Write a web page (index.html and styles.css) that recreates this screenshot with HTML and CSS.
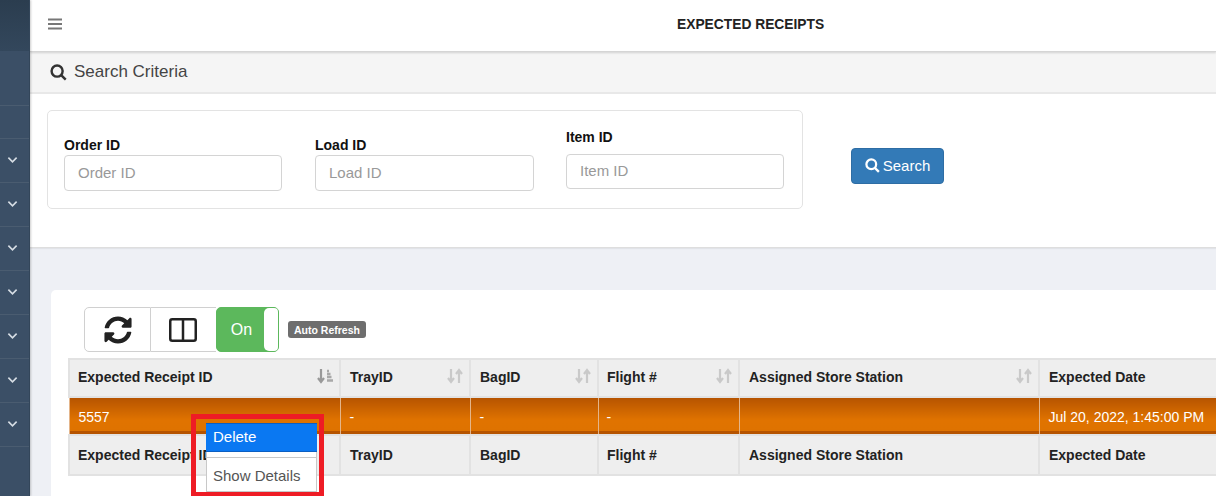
FILE: index.html
```html
<!DOCTYPE html>
<html lang="en">
<head>
<meta charset="utf-8">
<title>Expected Receipts</title>
<link rel="stylesheet" href="styles.css">
</head>
<body>
<div class="app">
  <aside class="sidebar">
    <div class="side-top"></div>
    <div class="side-item side-plain-a"></div>
    <div class="side-item side-plain-b"></div>
    <div class="side-item"><svg class="chev" viewBox="0 0 12 8"><path d="M1.500 1.500 6 6l4.500-4.500"/></svg></div>
    <div class="side-item"><svg class="chev" viewBox="0 0 12 8"><path d="M1.500 1.500 6 6l4.500-4.500"/></svg></div>
    <div class="side-item"><svg class="chev" viewBox="0 0 12 8"><path d="M1.500 1.500 6 6l4.500-4.500"/></svg></div>
    <div class="side-item"><svg class="chev" viewBox="0 0 12 8"><path d="M1.500 1.500 6 6l4.500-4.500"/></svg></div>
    <div class="side-item"><svg class="chev" viewBox="0 0 12 8"><path d="M1.500 1.500 6 6l4.500-4.500"/></svg></div>
    <div class="side-item"><svg class="chev" viewBox="0 0 12 8"><path d="M1.500 1.500 6 6l4.500-4.500"/></svg></div>
    <div class="side-item"><svg class="chev" viewBox="0 0 12 8"><path d="M1.500 1.500 6 6l4.500-4.500"/></svg></div>
  </aside>
  <main class="main">
    <header class="topbar">
      <svg class="burger" viewBox="0 0 14 12"><path d="M0 1.500h14M0 6h14M0 10.500h14"/></svg>
      <h1 class="title">EXPECTED RECEIPTS</h1>
    </header>
    <section class="search-panel">
      <div class="panel-head">
        <svg class="ico-search" viewBox="0 0 16 16"><circle cx="6.700" cy="6.700" r="5.200"/><path d="m10.500 10.500 4.300 4.300"/></svg>
        <span>Search Criteria</span>
      </div>
      <div class="panel-body">
        <form class="criteria">
          <div class="field">
            <label class="field-label">Order ID</label>
            <input class="field-input" placeholder="Order ID">
          </div>
          <div class="field field-wide">
            <label class="field-label">Load ID</label>
            <input class="field-input" placeholder="Load ID">
          </div>
          <div class="field field-raised">
            <label class="field-label">Item ID</label>
            <input class="field-input" placeholder="Item ID">
          </div>
        </form>
        <button class="search-btn" type="button">
          <svg class="ico-search-w" viewBox="0 0 16 16"><circle cx="6.700" cy="6.700" r="5.200"/><path d="m10.500 10.500 4.300 4.300"/></svg>
          Search
        </button>
      </div>
    </section>
    <section class="card">
      <div class="toolbar">
        <div class="btn-group">
          <button class="tool-btn" type="button">
            <svg class="ico-sync" viewBox="0 0 512 512"><path d="M370.720 133.280C339.458 104.008 298.888 87.962 255.848 88c-77.458.068-144.328 53.178-162.791 126.850-1.344 5.363-6.122 9.150-11.651 9.150H24.103c-7.498 0-13.194-6.807-11.807-14.176C33.933 94.924 134.813 8 256 8c66.448 0 126.791 26.136 171.315 68.685L463.030 40.970C478.149 25.851 504 36.559 504 57.941V192c0 13.255-10.745 24-24 24H345.941c-21.382 0-32.090-25.851-16.971-40.971l41.750-41.749zM32 296h134.059c21.382 0 32.090 25.851 16.971 40.971l-41.750 41.750c31.262 29.273 71.835 45.319 114.876 45.280 77.418-.07 144.315-53.144 162.787-126.849 1.344-5.363 6.122-9.150 11.651-9.150h57.304c7.498 0 13.194 6.807 11.807 14.176C478.067 417.076 377.187 504 256 504c-66.448 0-126.791-26.136-171.315-68.685L48.970 471.030C33.851 486.149 8 475.441 8 454.059V320c0-13.255 10.745-24 24-24z"/></svg>
          </button>
          <button class="tool-btn tool-btn-mid" type="button">
            <svg class="ico-cols" viewBox="0 0 28 24"><rect x="1.250" y="1.250" width="25.500" height="21.500" rx="2"/><path d="M14 1v22"/></svg>
          </button>
          <div class="switch"><span class="switch-on">On</span><span class="switch-knob"></span></div>
        </div>
        <span class="badge">Auto Refresh</span>
      </div>
      <table class="grid">
        <colgroup>
          <col class="c1"><col class="c2"><col class="c3"><col class="c4"><col class="c5"><col class="c6">
        </colgroup>
        <thead>
          <tr>
            <th>Expected Receipt ID<svg class="sort sort-active" viewBox="0 0 16 16"><path class="s" d="M4 1v12M1 10l3 4 3-4"/><path class="s2" d="M10 3h2M10 6h3.500M10 9h4.500M10 12.500h6"/></svg></th>
            <th>TrayID<svg class="sort" viewBox="0 0 16 16"><path class="s" d="M4 1v12M1 10l3 4 3-4M12 15V3M9 6l3-4 3 4"/></svg></th>
            <th>BagID<svg class="sort" viewBox="0 0 16 16"><path class="s" d="M4 1v12M1 10l3 4 3-4M12 15V3M9 6l3-4 3 4"/></svg></th>
            <th>Flight #<svg class="sort" viewBox="0 0 16 16"><path class="s" d="M4 1v12M1 10l3 4 3-4M12 15V3M9 6l3-4 3 4"/></svg></th>
            <th>Assigned Store Station<svg class="sort" viewBox="0 0 16 16"><path class="s" d="M4 1v12M1 10l3 4 3-4M12 15V3M9 6l3-4 3 4"/></svg></th>
            <th>Expected Date</th>
          </tr>
        </thead>
        <tbody>
          <tr class="row-sel">
            <td>5557</td><td>-</td><td>-</td><td>-</td><td></td><td>Jul 20, 2022, 1:45:00 PM</td>
          </tr>
        </tbody>
        <tfoot>
          <tr>
            <th>Expected Receipt ID</th><th>TrayID</th><th>BagID</th><th>Flight #</th><th>Assigned Store Station</th><th>Expected Date</th>
          </tr>
        </tfoot>
      </table>
    </section>
  </main>
</div>
<div class="callout"></div>
<ul class="ctx-menu">
  <li class="ctx-item ctx-active">Delete</li>
  <li class="ctx-sep"></li>
  <li class="ctx-item">Show Details</li>
</ul>
</body>
</html>
```
FILE: styles.css
```css
* { box-sizing: border-box; }
html, body { margin: 0; height: 100%; overflow: hidden; background: #fff; }
body { font-family: "Liberation Sans", Arial, sans-serif; font-size: 14px; color: #333; }

.app { display: flex; height: 496px; width: 1216px; overflow: hidden; background: #eef0f5; }

.sidebar { flex: 0 0 30px; width: 30px; background: #3b4f66; border-right: 1px solid #33465a; box-shadow: 1px 0 2px rgba(0,0,0,.2); position: relative; z-index: 2; }
.side-top { height: 51px; background: linear-gradient(#2b3d4f, #33475c); }
.side-item { height: 44px; border-bottom: 1px solid #4a5c70; display: flex; align-items: center; justify-content: center; padding: 0 4px 2px 0; }
.side-plain-a { height: 55px; }
.side-plain-b { height: 33px; }
.chev { width: 11px; height: 8px; fill: none; stroke: #d6dde4; stroke-width: 1.800; }

.main { flex: 1; min-width: 0; display: flex; flex-direction: column; }

.topbar { height: 52px; flex: none; background: #fff; border-bottom: 1px solid #d5d5d5; box-shadow: 0 1px 2px rgba(0,0,0,.15); display: flex; align-items: center; padding-left: 18px; position: relative; z-index: 1; }
.burger { width: 14px; height: 12px; fill: none; stroke: #777; stroke-width: 2; flex: none; margin-top: -3px; }
.title { margin: -3px 0 0; font-size: 13.800px; font-weight: 700; color: #222; position: absolute; left: 647px; white-space: nowrap; }

.search-panel { flex: none; height: 196px; background: #fff; border-bottom: 1px solid #dedede; box-shadow: 0 1px 1px rgba(0,0,0,.05); }
.panel-head { height: 42px; background: #f5f5f5; border-bottom: 2px solid #e8e8e8; display: flex; align-items: center; gap: 7px; padding-left: 20px; font-size: 17px; color: #444; }
.ico-search { width: 17px; height: 17px; fill: none; stroke: #333; stroke-width: 2.300; flex: none; }
.panel-body { display: flex; align-items: flex-start; padding: 16px 0 0 17px; }
.criteria { width: 756px; height: 99px; flex: none; border: 1px solid #e3e3e3; border-radius: 5px; display: flex; gap: 33px; padding: 25px 17px 0 16px; }
.field { width: 218px; flex: none; display: flex; flex-direction: column; }
.field-wide { width: 219px; margin-right: -1px; }
.field-raised { margin-top: -8px; }
.field-label { font-weight: 700; color: #111; font-size: 14px; line-height: 18px; margin-bottom: 1px; }
.field-raised .field-label { margin-bottom: 8px; }
.field-input { height: 36px; width: 100%; border: 1px solid #d4d4d4; border-radius: 4px; padding: 0 13px 2px; font: 15px "Liberation Sans", Arial, sans-serif; color: #333; outline: none; }
.field-raised .field-input { height: 35px; }
.field-input::placeholder { color: #999; opacity: 1; }
.search-btn { margin: 38px 0 0 48px; width: 93px; height: 36px; background: #337ab7; border: 1px solid #2e6da4; border-radius: 4px; color: #fff; font: 15px "Liberation Sans", Arial, sans-serif; display: flex; align-items: center; justify-content: center; gap: 3px; padding: 0 0 2px; }
.ico-search-w { width: 15px; height: 15px; fill: none; stroke: #fff; stroke-width: 2.400; flex: none; }

.card { margin: 42px 0 0 21px; flex: none; background: #fff; border-radius: 5px 0 0 0; padding: 17px 0 40px 17px; height: 240px; overflow: hidden; }
.toolbar { display: flex; align-items: center; gap: 9px; padding-left: 16px; height: 45px; margin-bottom: 6px; }
.btn-group { display: flex; height: 45px; flex: none; }
.tool-btn { width: 67px; height: 45px; background: #fff; border: 1px solid #d0d0d0; border-radius: 5px 0 0 5px; display: flex; align-items: center; justify-content: center; padding: 0; }
.tool-btn-mid { width: 65px; border-left: 0; border-right: 0; border-radius: 0; padding-right: 2px; }
.ico-sync { width: 28px; height: 28px; fill: #222; }
.ico-cols { width: 28px; height: 24px; fill: none; stroke: #222; stroke-width: 2.500; }
.switch { width: 63px; height: 45px; display: flex; background: #5cb85c; border: 1px solid #5cb85c; border-radius: 5px; overflow: hidden; }
.switch-on { flex: 1; color: #fff; font-size: 16px; display: flex; align-items: center; justify-content: center; padding-left: 2px; }
.switch-knob { width: 14px; background: #fff; border-radius: 5px 0 0 5px; }
.badge { background: #6e6e6e; color: #fff; font-size: 10.500px; font-weight: 700; border-radius: 3px; width: 78px; height: 17px; display: flex; align-items: center; justify-content: center; white-space: nowrap; }

.grid { table-layout: fixed; width: 1199px; border-collapse: collapse; }
.c1 { width: 271px; } .c2 { width: 130px; } .c3 { width: 128px; } .c4 { width: 141px; } .c5 { width: 300px; } .c6 { width: 229px; }
.grid th { position: relative; text-align: left; font-weight: 700; color: #222; background: #eee; border: 2px solid #e2e2e2; padding: 0 9px 2px; height: 38px; font-size: 14px; white-space: nowrap; }
.grid th:first-child { padding-left: 8px; }
.grid th:nth-child(4) { padding-left: 8px; }
.grid tfoot th { height: 40px; vertical-align: middle; padding-bottom: 0; }
.grid td { height: 38px; padding: 2px 9px 0; color: #fff; font-size: 14px; background: linear-gradient(#b65400, #e07300 62%, #de7200 92%, #b65400 92%); border-left: 1px solid #e4b58a; border-right: 1px solid #e4b58a; white-space: nowrap; }
.grid td:nth-child(4) { padding-left: 8px; }
.sort { position: absolute; right: 6px; top: 8px; width: 16px; height: 16px; fill: none; }
.sort .s { stroke: #c9c9c9; stroke-width: 2.200; }
.sort-active .s { stroke: #999; }
.sort .s2 { stroke: #a8a8a8; stroke-width: 2.500; }

.callout { position: absolute; left: 191px; top: 414px; width: 133px; height: 83px; border: 5px solid #ee1c25; pointer-events: none; z-index: 3; }
.ctx-menu { position: absolute; left: 206px; top: 423px; width: 111px; height: 69px; margin: 0; padding: 0; list-style: none; background: #fff; border: 1px solid #c8c8c8; z-index: 4; }
.ctx-item { height: 29px; padding-left: 6px; font-size: 15px; line-height: 27px; color: #555; }
.ctx-active { background: #0a78f2; color: #fff; border: 1px solid #0b5fc2; border-width: 1px 0; padding-left: 7px; line-height: 25px; margin: -1px -1px 0; }
.ctx-sep { height: 1px; margin: 5px 0 4px; background: #c8c8c8; }
```
